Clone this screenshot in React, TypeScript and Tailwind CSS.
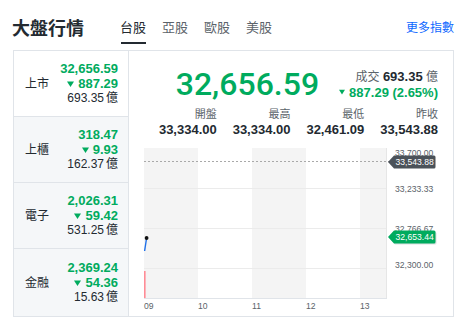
import React from "react";

const C = {
  green: "#00ab5e",
  dark: "#232a31",
  gray: "#5b636a",
  line: "#e0e4e9",
};

const markets = [
  { name: "上市", price: "32,656.59", change: "887.29", vol: "693.35", active: true },
  { name: "上櫃", price: "318.47", change: "9.93", vol: "162.37" },
  { name: "電子", price: "2,026.31", change: "59.42", vol: "531.25" },
  { name: "金融", price: "2,369.24", change: "54.36", vol: "15.63" },
];

const stats = [
  { label: "開盤", value: "33,334.00" },
  { label: "最高", value: "33,334.00" },
  { label: "最低", value: "32,461.09" },
  { label: "昨收", value: "33,543.88" },
];

function Down({ w = 7, h = 6 }: { w?: number; h?: number }) {
  return (
    <svg width={w} height={h} viewBox="0 0 7 6" className="shrink-0">
      <path d="M0 0.5h7L3.5 6z" fill={C.green} />
    </svg>
  );
}

function Chart() {
  const cols = [144, 198, 252, 306, 360];
  return (
    <svg width={324} height={175} viewBox="129 140 324 175" className="block">
      {/* stripes */}
      <rect x={144} y={148} width={54} height={150} fill="#f4f4f4" />
      <rect x={252} y={148} width={54} height={150} fill="#f4f4f4" />
      <rect x={360} y={148} width={26} height={150} fill="#f4f4f4" />
      {[188, 228, 268].map((y) => (
        <line key={y} x1={144} x2={386} y1={y + 0.5} y2={y + 0.5} stroke="#ebebeb" />
      ))}
      <line x1={386.5} x2={386.5} y1={148} y2={298} stroke="#e6e6e6" />
      <line x1={144} x2={387} y1={298.5} y2={298.5} stroke="#e0e4e9" />
      {/* prev close */}
      <line x1={144} x2={390} y1={161.5} y2={161.5} stroke="#a9a9a9" strokeDasharray="2 2" />
      {/* volume */}
      <rect x={144} y={271} width={1.6} height={27} fill="#ff8c96" />
      {/* price line */}
      <path d="M144.6 251 L146.6 238" stroke="#1e6fe8" strokeWidth={1.4} fill="none" />
      <circle cx={146.6} cy={238} r={1.9} fill="#111" />
      {/* y labels */}
      <g fontSize={8.6} fill={C.gray} fontFamily="'Liberation Sans', sans-serif">
        <text x={395} y={155.5}>33,700.00</text>
        <text x={395} y={191.5}>33,233.33</text>
        <text x={395} y={231.5}>32,766.67</text>
        <text x={395} y={267.5}>32,300.00</text>
      </g>
      {/* tags */}
      <path d="M388 162 L394 155.5 H434 a1.5 1.5 0 0 1 1.5 1.5 V167 a1.5 1.5 0 0 1 -1.5 1.5 H394 Z" fill="#4b5259" />
      <text x={395.5} y={165.3} fontSize={8.6} fill="#fff" fontFamily="'Liberation Sans', sans-serif">33,543.88</text>
      <path d="M389 238 L395 232 H435 a1.5 1.5 0 0 1 1.5 1.5 V243 a1.5 1.5 0 0 1 -1.5 1.5 H395 Z" fill="#c9cdd1" opacity={0.6} />
      <path d="M388 237 L394 230.5 H434 a1.5 1.5 0 0 1 1.5 1.5 V242 a1.5 1.5 0 0 1 -1.5 1.5 H394 Z" fill={C.green} />
      <text x={395.5} y={240.3} fontSize={8.6} fill="#fff" fontFamily="'Liberation Sans', sans-serif">32,653.44</text>
      {/* x labels */}
      <g fontSize={8.6} fill={C.gray} fontFamily="'Liberation Sans', sans-serif">
        {["09", "10", "11", "12", "13"].map((t, i) => (
          <text key={t} x={cols[i]} y={309}>{t}</text>
        ))}
      </g>
    </svg>
  );
}

export default function App() {
  return (
    <div
      className="w-[463px] h-[332px] bg-white overflow-hidden"
      style={{ fontFamily: "'Liberation Sans', 'Noto Sans CJK TC', sans-serif" }}
    >
      {/* header */}
      <div className="h-[50px] flex items-start pl-[12px] pr-[9px]">
        <h1 className="mt-[18px] text-[18px] leading-[22px] font-bold text-[#232a31]">大盤行情</h1>
        <nav className="ml-[36px] flex gap-[16px]">
          {["台股", "亞股", "歐股", "美股"].map((t, i) => (
            <div key={t} className="flex flex-col items-center">
              <span className={`mt-[20px] text-[13px] leading-[16px] ${i === 0 ? "text-[#232a31]" : "text-[#5b636a]"}`}>{t}</span>
              {i === 0 && <span className="mt-[6px] h-[2px] w-[25px] bg-[#232a31]" />}
            </div>
          ))}
        </nav>
        <a className="ml-auto mt-[20px] text-[12px] leading-[16px] text-[#0f69ff]">更多指數</a>
      </div>

      {/* box */}
      <div className="ml-[13px] w-[441px] h-[267px] border border-[#e0e4e9] flex">
        <div className="w-[115px] flex flex-col border-r border-[#e0e4e9]">
          {markets.map((m, i) => (
            <div
              key={m.name}
              className={`flex items-center justify-between pl-[11px] pr-[10px] ${
                i < 3 ? "h-[66px] border-b border-[#e0e4e9]" : "flex-1"
              } ${m.active ? "bg-white" : "bg-[#f5f7f9]"}`}
            >
              <span className="text-[12px] text-[#232a31]">{m.name}</span>
              <div className="flex flex-col items-end leading-[15px]">
                <span className="text-[13px] font-bold text-[#00ab5e]">{m.price}</span>
                <span className="flex items-center gap-[4px] text-[13px] font-bold text-[#00ab5e]">
                  <Down />
                  {m.change}
                </span>
                <span className="text-[12px] text-[#232a31]">
                  {m.vol}
                  <span className="ml-[2px]">億</span>
                </span>
              </div>
            </div>
          ))}
        </div>

        <div className="flex-1 flex flex-col">
          <div className="pt-[14px] pr-[15px] h-[38px] box-content flex items-center justify-end gap-[20px]">
            <span
              className="text-[32px] leading-[38px] font-medium text-[#00ab5e]"
              style={{ fontFamily: "Roboto, 'Liberation Sans', sans-serif" }}
            >
              32,656.59
            </span>
            <div className="flex flex-col items-end leading-[15px]">
              <span className="text-[12px] text-[#5b636a]">
                成交 <span className="text-[13px] font-bold text-[#232a31]">693.35</span> 億
              </span>
              <span className="flex items-center gap-[4px] text-[13px] font-bold text-[#00ab5e]">
                <Down w={6} h={6} />
                887.29 (2.65%)
              </span>
            </div>
          </div>
          <div className="mt-[3px] pl-[14px] pr-[15px] grid grid-cols-4 leading-[16px]">
            {stats.map((s) => (
              <div key={s.label} className="flex flex-col items-end">
                <span className="text-[11px] text-[#5b636a]">{s.label}</span>
                <span className="text-[13px] font-bold text-[#232a31]">{s.value}</span>
              </div>
            ))}
          </div>
          <div className="mt-[2px]">
            <Chart />
          </div>
        </div>
      </div>
    </div>
  );
}
